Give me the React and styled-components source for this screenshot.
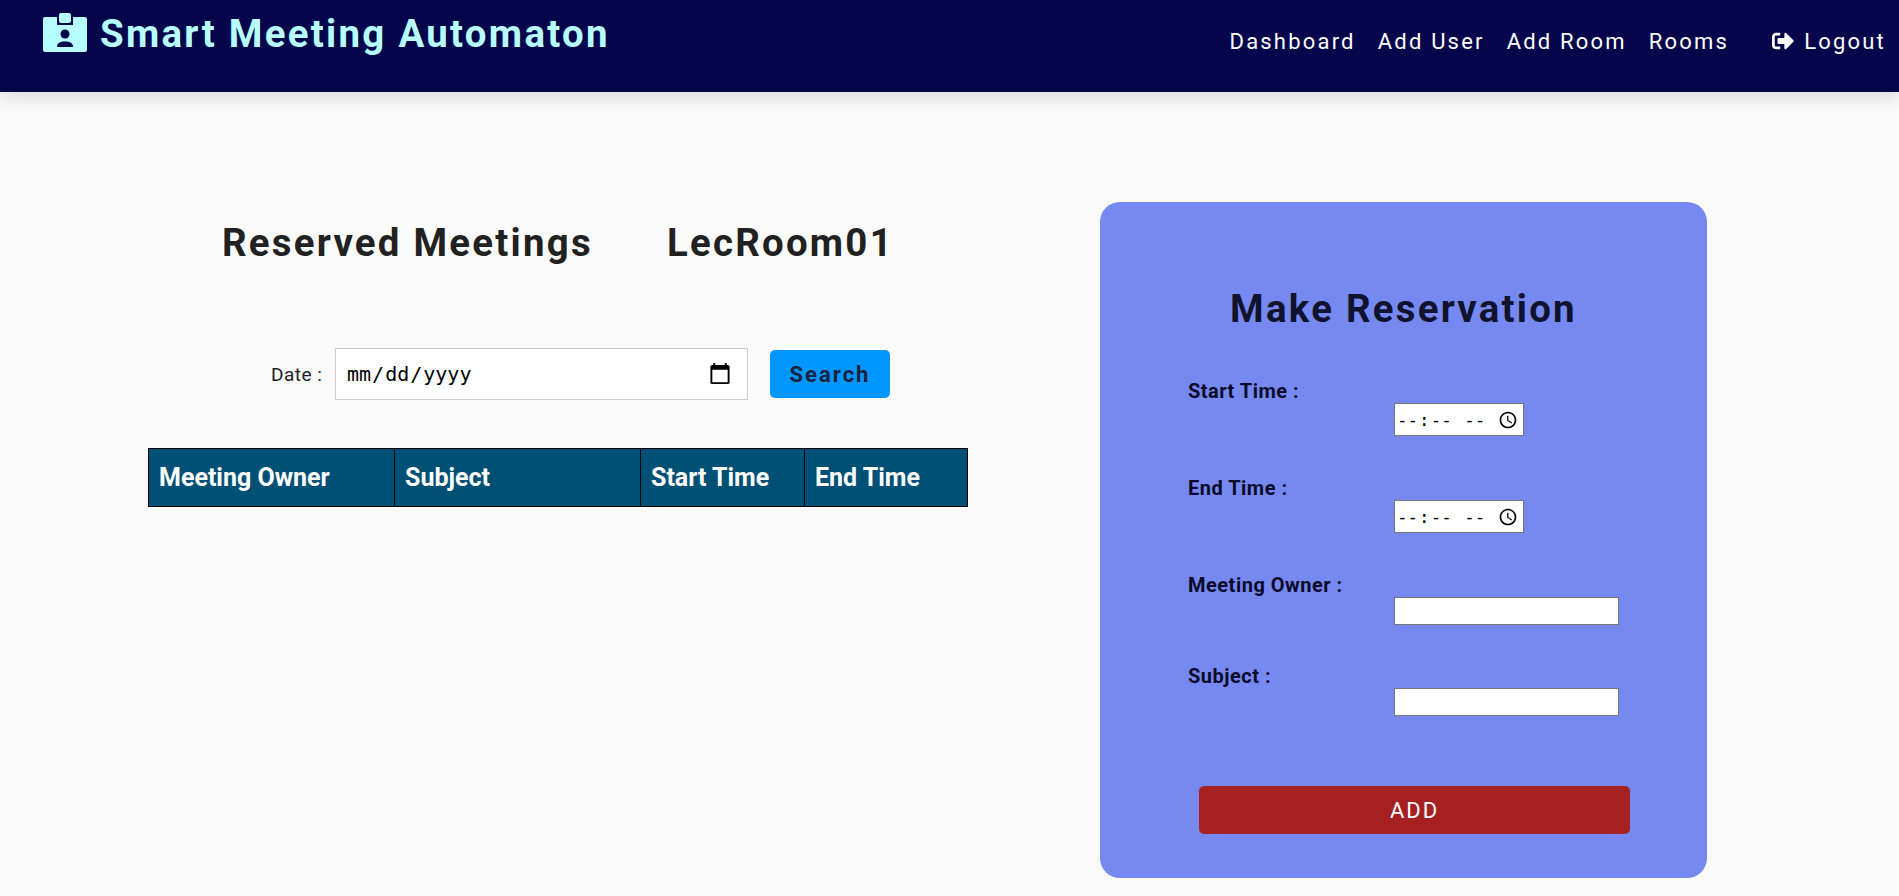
import React from 'react';
import styled, { createGlobalStyle } from 'styled-components';
import { FaSignOutAlt } from 'react-icons/fa';

const GlobalStyle = createGlobalStyle`
  html, body {
    margin: 0;
    padding: 0;
    background: #fafafa;
    font-family: 'Roboto', sans-serif;
    letter-spacing: 1.5px;
    overflow: hidden;
  }
  * { box-sizing: border-box; }
`;

const NAV_LINKS = ['Dashboard', 'Add User', 'Add Room', 'Rooms'];
const COLUMNS = ['Meeting Owner', 'Subject', 'Start Time', 'End Time'];

function BadgeIcon() {
  return (
    <svg width="44" height="40" viewBox="0 0 44 40" fill="#b8ffff" aria-hidden="true">
      <rect x="0" y="4" width="44" height="35" rx="2" />
      <path d="M14 4h16v8H14z" fill="#04054a" />
      <rect x="16" y="0" width="12" height="10" rx="2" />
      <circle cx="22" cy="21" r="4.5" fill="#04054a" />
      <path d="M14 34c0-4 3-5.500 8-5.500s8 1.500 8 5.500z" fill="#04054a" />
    </svg>
  );
}

export default function App() {
  return (
    <>
      <GlobalStyle />
      <Header>
        <Brand>
          <BadgeIcon />
          <BrandName>Smart Meeting Automaton</BrandName>
        </Brand>
        <Nav>
          {NAV_LINKS.map(link => (
            <NavLink key={link}>{link}</NavLink>
          ))}
          <LogoutLink>
            <FaSignOutAlt size={22} />
            Logout
          </LogoutLink>
        </Nav>
      </Header>
      <Main>
        <Reserved>
          <Titles>
            <Title>Reserved Meetings</Title>
            <Title>LecRoom01</Title>
          </Titles>
          <SearchRow>
            <DateLabel>Date :</DateLabel>
            <DateInput type="date" />
            <SearchButton>Search</SearchButton>
          </SearchRow>
          <Table>
            <thead>
              <tr>
                {COLUMNS.map(col => (
                  <Th key={col}>{col}</Th>
                ))}
              </tr>
            </thead>
          </Table>
        </Reserved>
        <Card>
          <CardTitle>Make Reservation</CardTitle>
          <Field $height={97}>
            <FieldLabel>Start Time :</FieldLabel>
            <TimeInput type="time" />
          </Field>
          <Field $height={97}>
            <FieldLabel>End Time :</FieldLabel>
            <TimeInput type="time" />
          </Field>
          <Field $height={91}>
            <FieldLabel>Meeting Owner :</FieldLabel>
            <TextInput type="text" />
          </Field>
          <Field $height={91}>
            <FieldLabel>Subject :</FieldLabel>
            <TextInput type="text" />
          </Field>
          <AddButton>ADD</AddButton>
        </Card>
      </Main>
    </>
  );
}

const Header = styled.header`
  display: flex;
  justify-content: space-between;
  height: 92px;
  padding: 13px 13px 0 43px;
  background: #04054a;
  box-shadow: 0 4px 20px rgba(0, 0, 0, 0.14);
`;
const Brand = styled.div`
  display: flex;
  align-items: flex-start;
  gap: 13px;
`;
const BrandName = styled.span`
  margin-top: -1px;
  font-size: 38.4px;
  line-height: 43px;
  font-weight: 700;
  letter-spacing: 2.3px;
  color: #b8ffff;
`;
const Nav = styled.nav`
  display: flex;
  align-items: center;
  height: 54px;
  margin-top: 1px;
`;
const NavLink = styled.a`
  margin-right: 22px;
  font-size: 22px;
  letter-spacing: 2.2px;
  color: #fff;
`;
const LogoutLink = styled(NavLink)`
  display: flex;
  align-items: center;
  gap: 10px;
  margin: 0 0 0 21px;
`;
const Main = styled.main`
  display: flex;
  align-items: flex-start;
  padding: 110px 0 0 148px;
`;
const Reserved = styled.section`
  width: 820px;
`;
const Titles = styled.div`
  display: flex;
  gap: 74px;
  padding-left: 74px;
  margin-top: 19px;
`;
const Title = styled.h2`
  margin: 0;
  font-size: 38.4px;
  line-height: 44px;
  font-weight: 700;
  letter-spacing: 2.25px;
  color: #212121;
`;
const SearchRow = styled.div`
  display: flex;
  align-items: center;
  margin-top: 83px;
  padding-left: 123px;
`;
const DateLabel = styled.label`
  flex: 0 0 64px;
  font-size: 19px;
  letter-spacing: 0.5px;
  white-space: nowrap;
  color: #212121;
`;
const DateInput = styled.input`
  width: 413px;
  height: 52px;
  padding: 0 10px;
  border: 1px solid #ccc;
  background: #fff;
  font-size: 20px;
  font-family: 'DejaVu Sans Mono', monospace;
  &::-webkit-calendar-picker-indicator {
    width: 24px;
    height: 24px;
    margin-right: 5px;
    padding: 0;
  }
`;
const SearchButton = styled.button`
  width: 120px;
  height: 48px;
  margin-left: 22px;
  border: none;
  border-radius: 5px;
  background: #0096ff;
  font-family: inherit;
  font-size: 22px;
  font-weight: 700;
  letter-spacing: 2px;
  color: #1a2340;
`;
const Table = styled.table`
  width: 819px;
  margin-top: 48px;
  border-collapse: collapse;
  table-layout: fixed;
`;
const Th = styled.th`
  height: 58px;
  padding: 0 10px;
  border: 1px solid #000;
  background: #004f75;
  color: #fff;
  font-size: 25px;
  font-weight: 700;
  text-align: left;
  letter-spacing: 0;
  &:nth-child(1), &:nth-child(2) { width: 246px; }
  &:nth-child(3) { width: 164px; }
  &:nth-child(4) { width: 163px; }
`;
const Card = styled.section`
  width: 607px;
  height: 676px;
  margin-left: 132px;
  padding: 85px 73px 0 88px;
  border-radius: 20px;
  background: #7589f0;
`;
const CardTitle = styled.h2`
  margin: 0 0 46px -15px;
  font-size: 38.4px;
  line-height: 44px;
  font-weight: 700;
  letter-spacing: 2.25px;
  text-align: center;
  color: #10122e;
`;
const Field = styled.div`
  height: ${props => props.$height}px;
`;
const FieldLabel = styled.label`
  display: block;
  height: 26px;
  font-size: 20px;
  font-weight: 700;
  letter-spacing: 0.5px;
  line-height: 28px;
  color: #0a0a2a;
`;
const FieldInput = styled.input`
  display: block;
  margin-left: 206px;
  border: 1px solid #767676;
  background: #fff;
  letter-spacing: inherit;
`;
const TimeInput = styled(FieldInput)`
  width: 130px;
  height: 33px;
  font-size: 17.5px;
  &::-webkit-calendar-picker-indicator {
    width: 20px;
    height: 20px;
    margin-right: 5px;
    padding: 0;
  }
`;
const TextInput = styled(FieldInput)`
  width: 225px;
  height: 28px;
  font-size: 16px;
`;
const AddButton = styled.button`
  display: block;
  width: 431px;
  height: 48px;
  margin: 33px 0 0 11px;
  border: none;
  border-radius: 5px;
  background: #a52020;
  font-family: inherit;
  font-size: 22px;
  letter-spacing: 2px;
  color: #fff;
`;
